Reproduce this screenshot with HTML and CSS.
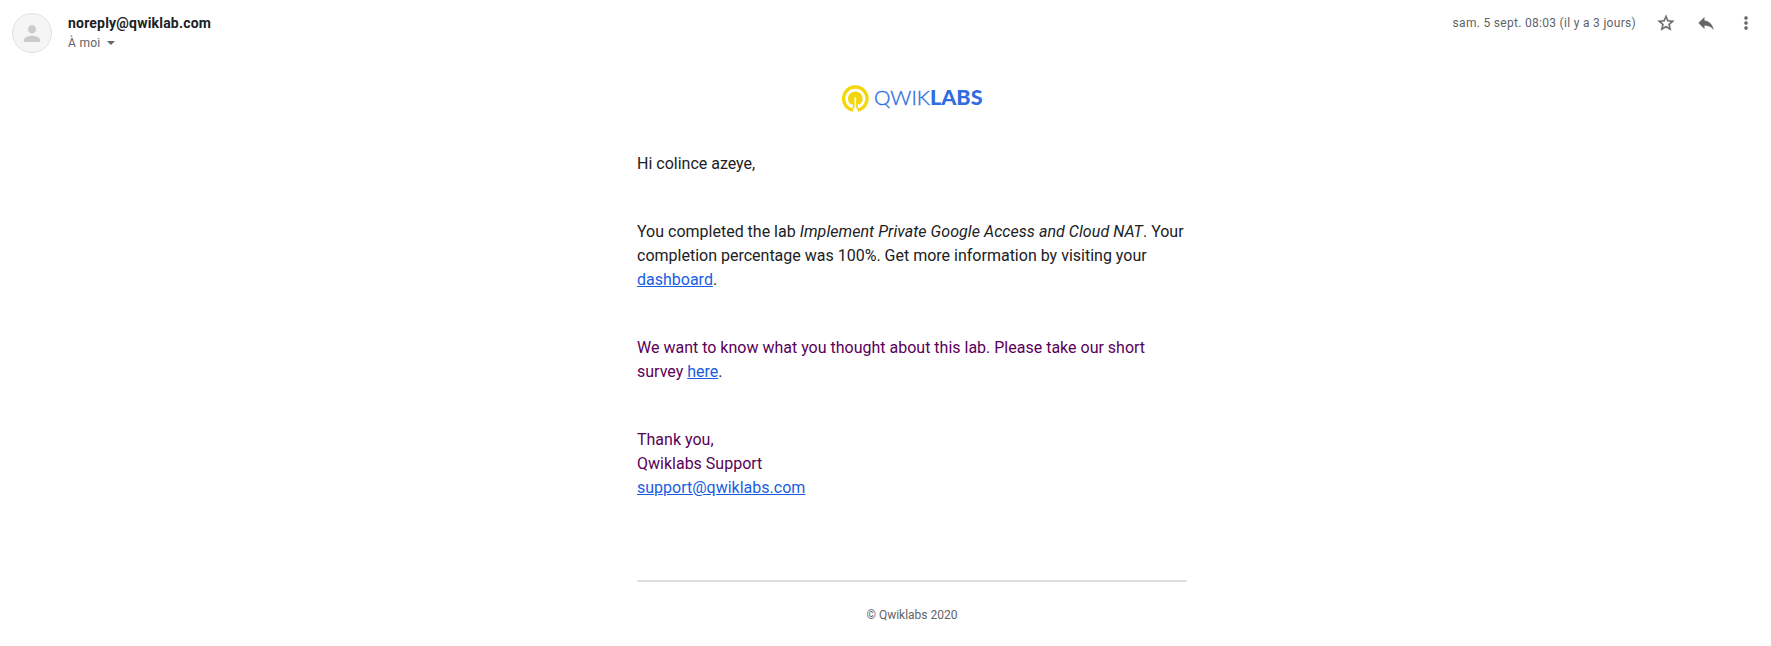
FILE: index.html
```html
<!DOCTYPE html>
<html lang="fr">
<head>
<meta charset="utf-8">
<title>Qwiklabs</title>
<link rel="stylesheet" href="styles.css">
</head>
<body>
<header class="header">
  <svg class="avatar" viewBox="0 0 40 40"><circle cx="20" cy="20" r="19.5" fill="#f5f5f5" stroke="#e0e0e0"/><circle cx="20" cy="16.2" r="4" fill="#ccc"/><path d="M12 29v-2.200c0-2.700 5.300-4.100 8-4.100s8 1.400 8 4.100V29z" fill="#ccc"/></svg>
  <div class="sender">
    <div class="name">noreply@qwiklab.com</div>
    <div class="to"><span>À moi</span><svg class="caret" viewBox="0 0 8 4"><path d="M0 0h8L4 4z" fill="#666"/></svg></div>
  </div>
  <div class="actions">
    <span class="date">sam. 5 sept. 08:03 (il y a 3 jours)</span>
    <svg class="icon" viewBox="0 0 24 24"><path d="M22 9.240l-7.190-.62L12 2 9.190 8.630 2 9.240l5.460 4.730L5.820 21 12 17.270 18.180 21l-1.630-7.030L22 9.240zM12 15.400l-3.760 2.270 1-4.280-3.320-2.880 4.380-.38L12 6.100l1.710 4.040 4.380.38-3.320 2.880 1 4.280L12 15.400z"/></svg>
    <svg class="icon" viewBox="0 0 24 24"><path d="M10 9V5l-7 7 7 7v-4.100c5 0 8.500 1.600 11 5.100-1-5-4-10-11-11z"/></svg>
    <svg class="icon" viewBox="0 0 24 24"><path d="M12 8c1.100 0 2-.9 2-2s-.9-2-2-2-2 .9-2 2 .9 2 2 2zm0 2c-1.100 0-2 .9-2 2s.9 2 2 2 2-.9 2-2-.9-2-2-2zm0 6c-1.100 0-2 .9-2 2s.9 2 2 2 2-.9 2-2-.9-2-2-2z"/></svg>
  </div>
</header>
<main class="mail">
  <svg class="logo" viewBox="0 0 144 32">
    <path d="M12 28.100A11.700 11.700 0 1 1 16.600 28.100" fill="none" stroke="#f4d60c" stroke-width="3.400"/>
    <circle cx="14.300" cy="16.700" r="7.300" fill="#f4d60c"/>
    <path d="M13.400 15.500h1.800v15h-1.800zM10.800 22h1.600v3h-1.600zM16.200 22h1.600v3h-1.600z" fill="#fff"/>
    <path d="M11.700 18.500h1.700v8h-1.700zM15.200 18.500h1.700v8h-1.700z" fill="#f4d60c"/>
    <text class="logo-light" x="33" y="22.700" textLength="56" lengthAdjust="spacingAndGlyphs">QWIK</text>
    <text class="logo-bold" x="89" y="22.700" textLength="52.500" lengthAdjust="spacingAndGlyphs">LABS</text>
  </svg>
  <p>Hi colince azeye,</p>
  <p>You completed the lab <em>Implement Private Google Access and Cloud NAT</em>. Your completion percentage was 100%. Get more information by visiting your <a href="#">dashboard</a>.</p>
  <p class="quoted">We want to know what you thought about this lab. Please take our short survey <a href="#">here</a>.</p>
  <p class="quoted">Thank you,<br>Qwiklabs Support<br><a href="#">support@qwiklabs.com</a></p>
  <footer class="footer">© Qwiklabs 2020</footer>
</main>
</body>
</html>
```
FILE: styles.css
```css
body {
  margin: 0;
  background: #fff;
  color: #202124;
  font-family: Roboto, Arial, sans-serif;
}
.header {
  display: flex;
  align-items: flex-start;
  height: 71px;
  padding: 13px 15px 0 12px;
  box-sizing: border-box;
}
.avatar { width: 40px; height: 40px; }
.sender { margin-left: 16px; }
.name {
  font-size: 14px;
  font-weight: 700;
  line-height: 20px;
  letter-spacing: 0.2px;
}
.to {
  display: flex;
  align-items: center;
  gap: 6px;
  color: #5f6368;
  font-size: 12px;
  line-height: 20px;
  letter-spacing: 0.3px;
}
.caret { width: 8px; height: 4px; }
.actions {
  display: flex;
  align-items: center;
  gap: 20px;
  margin-left: auto;
  height: 20px;
}
.date {
  color: #5f6368;
  font-size: 12px;
  letter-spacing: 0.3px;
}
.icon {
  width: 20px;
  height: 20px;
  fill: #666;
  stroke: #666;
  stroke-width: 0.3;
}
.mail { width: 550px; margin-left: 637px; }
.logo { display: block; width: 144px; height: 32px; margin: 11px 0 38px 204px; }
.logo text { font-family: Lato, sans-serif; font-size: 20px; fill: #316ce0; }
.logo .logo-light { font-weight: 300; stroke: #316ce0; stroke-width: 0.35; }
.logo .logo-bold { font-weight: 900; }
.mail p {
  margin: 0 0 44px;
  font-size: 16px;
  line-height: 24px;
}
.mail em { letter-spacing: 0.06px; }
.mail a { color: #1a5ce0; }
.mail .quoted { color: #5a005a; }
.footer {
  margin-top: 80px;
  padding-top: 24px;
  border-top: 2px solid #e0e0e3;
  color: #5f6368;
  font-size: 12px;
  line-height: 18px;
  text-align: center;
}
```
